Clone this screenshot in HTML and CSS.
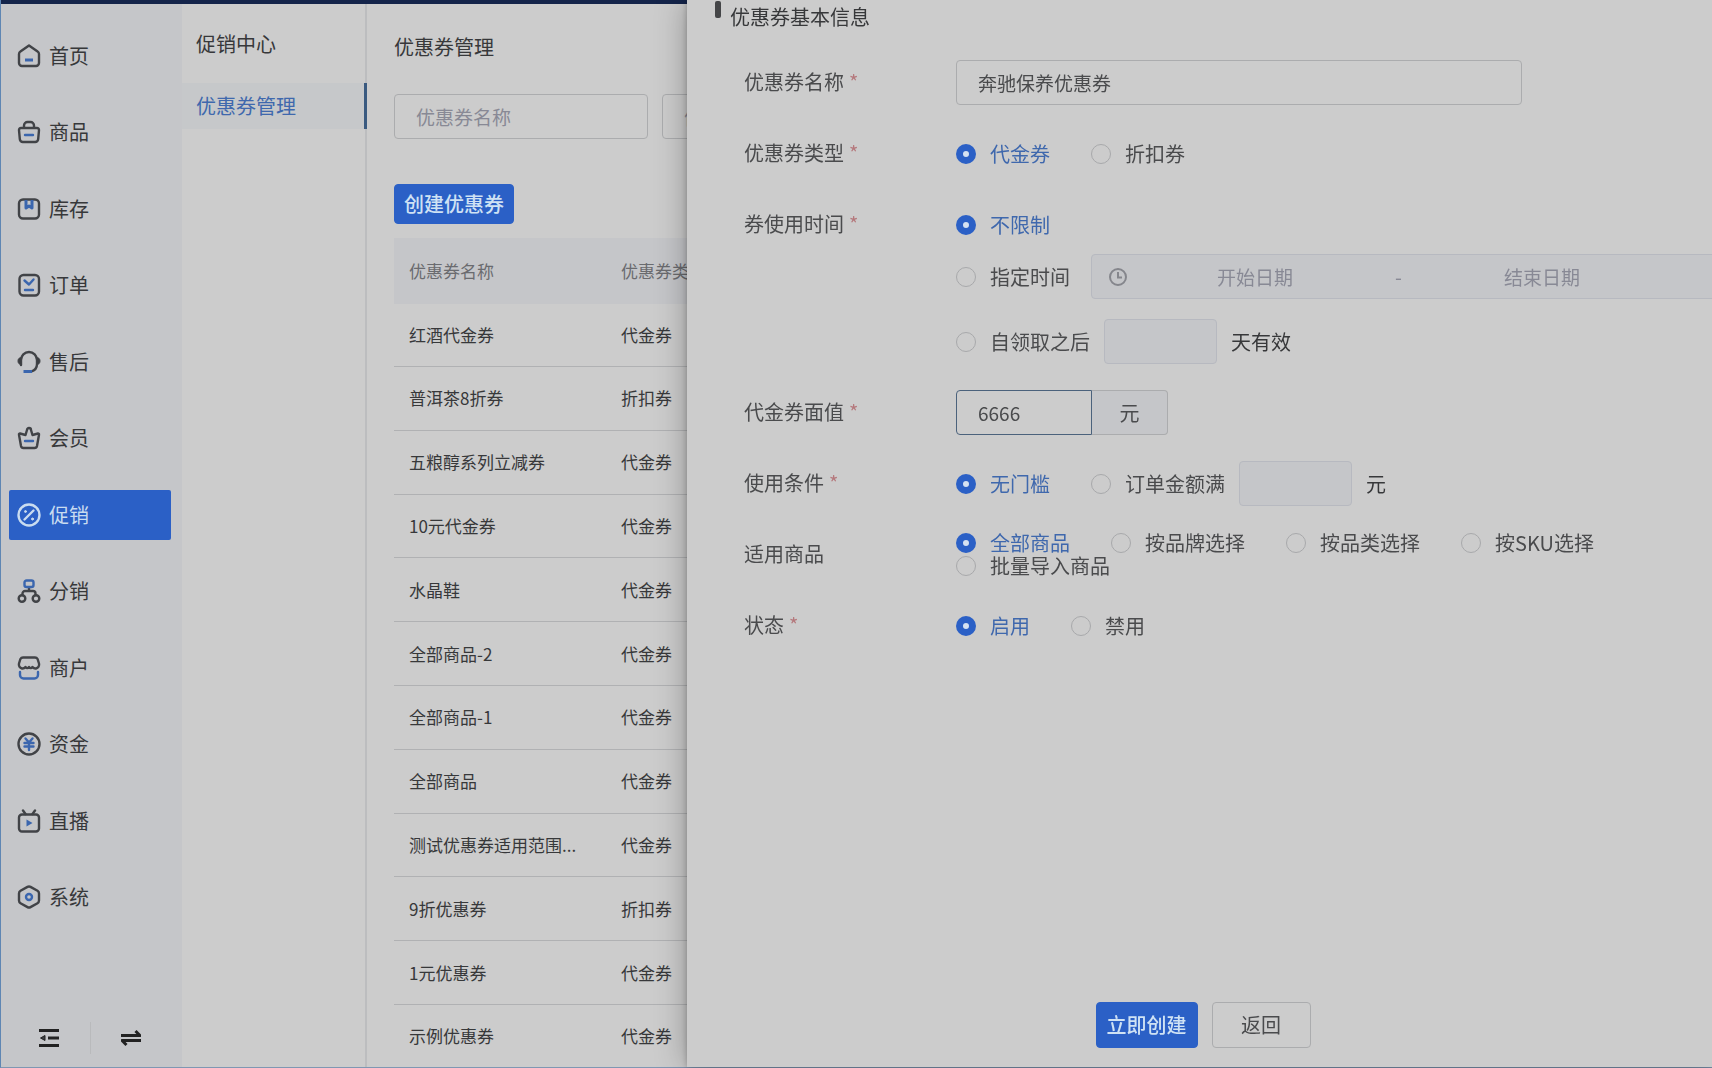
FILE: index.html
```html
<!DOCTYPE html>
<html lang="zh-CN">
<head>
<meta charset="utf-8">
<meta name="viewport" content="width=device-width, initial-scale=1">
<title>优惠券管理</title>
<link rel="stylesheet" href="styles.css">
</head>
<body>
<div class="app">
  <div class="topbar"></div>
  <div class="layout">
    <aside class="sidebar">
      <nav class="nav">
        <a class="nav-item" href="#"><svg class="icon" viewBox="0 0 24 24"><path d="M12 1.500 3.400 7.600A3 3 0 0 0 2 10v9a3 3 0 0 0 3 3h14a3 3 0 0 0 3-3v-9a3 3 0 0 0-1.400-2.400Z"/><path class="accent thick" d="M8 16h8"/></svg>首页</a>
        <a class="nav-item" href="#"><svg class="icon" viewBox="0 0 24 24"><path d="M7 8V5.500a3.500 3.500 0 0 1 3.500-3.500h3A3.500 3.500 0 0 1 17 5.500V8M4 8h16a2 2 0 0 1 2 2.200l-.8 8.800a3 3 0 0 1-3 3H5.800a3 3 0 0 1-3-3L2 10.200A2 2 0 0 1 4 8Z"/><path class="accent" d="M8 15h8"/></svg>商品</a>
        <a class="nav-item" href="#"><svg class="icon" viewBox="0 0 24 24"><rect x="2" y="2.500" width="20" height="19" rx="4"/><path class="accent thick" d="M9 3v8l3-2 3 2V3"/></svg>库存</a>
        <a class="nav-item" href="#"><svg class="icon" viewBox="0 0 24 24"><rect x="2.500" y="2" width="19.500" height="20.500" rx="4"/><path class="accent" d="m7.500 7.500 4.500 4 4.500-5M8 17h8"/></svg>订单</a>
        <a class="nav-item" href="#"><svg class="icon" viewBox="0 0 24 24"><path d="M4 15V10a8 8 0 0 1 16 0v4c0 4-2 6.500-6 7.500"/><path class="solid" d="M4.500 7.500v7C2 14.500 1 13 1 11s1-3.500 3.500-3.500ZM19.500 7.500v7c2.500 0 3.500-1.500 3.500-3.500s-1-3.500-3.500-3.500Z"/><path class="accent thick" d="M6.500 21.500H15"/></svg>售后</a>
        <a class="nav-item" href="#"><svg class="icon" viewBox="0 0 24 24"><path d="M12 2a2 2 0 0 1 2 2l1.500 5 5.500-1.500a1 1 0 0 1 1 1.200L20 20a2.500 2.500 0 0 1-2.500 2h-11A2.500 2.500 0 0 1 4 20L2 8.700a1 1 0 0 1 1-1.200L8.500 9 10 4a2 2 0 0 1 2-2Z"/><path class="accent" d="M8 15h8"/></svg>会员</a>
        <a class="nav-item active" href="#"><svg class="icon" viewBox="0 0 24 24"><circle cx="12" cy="12" r="10.500"/><path d="m7.500 16.500 9-9"/><circle class="solid" cx="8.500" cy="8.500" r="1"/><circle class="solid" cx="15.500" cy="16" r="1"/></svg>促销</a>
        <a class="nav-item" href="#"><svg class="icon" viewBox="0 0 24 24"><path d="M12 9v3M5.500 16v-1.500a2.500 2.500 0 0 1 2.500-2.500h8a2.500 2.500 0 0 1 2.500 2.500V16"/><circle cx="5" cy="19.500" r="3.300"/><circle cx="19" cy="19.500" r="3.300"/><rect class="accent" x="7.500" y="1.500" width="9" height="6.500" rx="2"/></svg>分销</a>
        <a class="nav-item" href="#"><svg class="icon" viewBox="0 0 24 24"><path d="M6 1.500h12a3 3 0 0 1 2.600 1.500l1.400 4.500a4 4 0 0 1-3 5c-1.500.3-2.500-.3-3.500-1.500-1 1.500-2.500 1.500-3.500 0-1 1.500-2.500 1.500-3.500 0-1 1.200-2 1.800-3.500 1.500a4 4 0 0 1-3-5L3.400 3A3 3 0 0 1 6 1.500Z"/><path class="accent" d="M3 16v3a3.500 3.500 0 0 0 3.500 3.500h11A3.500 3.500 0 0 0 21 19v-3"/></svg>商户</a>
        <a class="nav-item" href="#"><svg class="icon" viewBox="0 0 24 24"><circle cx="12" cy="12" r="10.500"/><path class="accent" d="m8.500 6.500 3.500 4 3.500-4M7.500 11h9M7.500 14.500h9M12 11v7"/></svg>资金</a>
        <a class="nav-item" href="#"><svg class="icon" viewBox="0 0 24 24"><rect x="2" y="5.500" width="20" height="17" rx="3"/><path d="M6 1.500 8.500 5M18 1.500 15.500 5"/><path class="accent-fill" d="M9.500 10.500v7l6-3.500Z"/></svg>直播</a>
        <a class="nav-item" href="#"><svg class="icon" viewBox="0 0 24 24"><path d="M10.500 1.900a3 3 0 0 1 3 0l7 3.900A3 3 0 0 1 22 8.400v7.200a3 3 0 0 1-1.500 2.600l-7 3.900a3 3 0 0 1-3 0l-7-3.900A3 3 0 0 1 2 15.600V8.400a3 3 0 0 1 1.500-2.600Z"/><circle class="accent" cx="12" cy="12" r="3"/></svg>系统</a>
      </nav>
      <div class="sidebar-tools">
        <button class="tool" type="button" aria-label="收起菜单"><svg class="icon small" viewBox="0 0 20 20"><path d="M0 2.500h20M9 10h11M0 17.500h20"/><path class="solid" d="M6 7.500v5L1.500 10Z"/></svg></button>
        <button class="tool" type="button" aria-label="切换"><svg class="icon small" viewBox="0 0 20 20"><path d="M0 7.500h19L14.500 3M20 12.500H1L5.500 17"/></svg></button>
      </div>
    </aside>

    <nav class="submenu">
      <h2 class="submenu-title">促销中心</h2>
      <a class="submenu-item" href="#">优惠券管理</a>
    </nav>

    <main class="main">
      <h1 class="page-title">优惠券管理</h1>
      <div class="filters">
        <input class="control filter" type="text" placeholder="优惠券名称" aria-label="优惠券名称">
        <select class="control filter" aria-label="优惠券类型"><option>优惠券类型</option></select>
      </div>
      <button class="btn btn-primary btn-create" type="button">创建优惠券</button>
      <div class="table-wrap">
        <table class="table">
          <thead><tr><th class="col-name">优惠券名称</th><th>优惠券类型</th></tr></thead>
          <tbody>
            <tr><td>红酒代金券</td><td>代金券</td></tr>
            <tr><td>普洱茶8折券</td><td>折扣券</td></tr>
            <tr><td>五粮醇系列立减券</td><td>代金券</td></tr>
            <tr><td>10元代金券</td><td>代金券</td></tr>
            <tr><td>水晶鞋</td><td>代金券</td></tr>
            <tr><td>全部商品-2</td><td>代金券</td></tr>
            <tr><td>全部商品-1</td><td>代金券</td></tr>
            <tr><td>全部商品</td><td>代金券</td></tr>
            <tr><td>测试优惠券适用范围...</td><td>代金券</td></tr>
            <tr><td>9折优惠券</td><td>折扣券</td></tr>
            <tr><td>1元优惠券</td><td>代金券</td></tr>
            <tr><td>示例优惠券</td><td>代金券</td></tr>
          </tbody>
        </table>
      </div>
    </main>
  </div>

  <section class="drawer" aria-labelledby="drawer-title">
    <h2 class="drawer-title" id="drawer-title">优惠券基本信息</h2>
    <form class="form">
      <div class="row">
        <label class="row-label required" for="name">优惠券名称</label>
        <input class="control name-input" id="name" type="text" value="奔驰保养优惠券">
      </div>

      <div class="row" role="radiogroup" aria-labelledby="l-type">
        <span class="row-label required" id="l-type">优惠券类型</span>
        <div class="line">
          <label class="radio"><input type="radio" name="type" checked><span>代金券</span></label>
          <label class="radio"><input type="radio" name="type"><span>折扣券</span></label>
        </div>
      </div>

      <div class="row" role="radiogroup" aria-labelledby="l-time">
        <span class="row-label required" id="l-time">券使用时间</span>
        <div class="stack">
          <div class="line"><label class="radio"><input type="radio" name="time" checked><span>不限制</span></label></div>
          <div class="line line-range">
            <label class="radio"><input type="radio" name="time"><span>指定时间</span></label>
            <div class="range">
              <svg class="clock" viewBox="0 0 18 18"><circle cx="9" cy="9" r="8"/><path d="M9 4v5.500h4"/></svg>
              <input class="range-input" type="text" placeholder="开始日期" aria-label="开始日期" disabled>
              <span class="range-sep">-</span>
              <input class="range-input" type="text" placeholder="结束日期" aria-label="结束日期" disabled>
            </div>
          </div>
          <div class="line line-days">
            <label class="radio"><input type="radio" name="time"><span>自领取之后</span></label>
            <input class="control short" type="text" aria-label="有效天数" disabled>
            <span class="unit">天有效</span>
          </div>
        </div>
      </div>

      <div class="row">
        <label class="row-label required" for="value">代金券面值</label>
        <div class="group">
          <input class="control value-input" id="value" type="text" value="6666">
          <span class="addon">元</span>
        </div>
      </div>

      <div class="row" role="radiogroup" aria-labelledby="l-cond">
        <span class="row-label required" id="l-cond">使用条件</span>
        <div class="line">
          <label class="radio"><input type="radio" name="cond" checked><span>无门槛</span></label>
          <div class="line line-amount">
            <label class="radio"><input type="radio" name="cond"><span>订单金额满</span></label>
            <input class="control short" type="text" aria-label="订单金额" disabled>
            <span class="unit">元</span>
          </div>
        </div>
      </div>

      <div class="row" role="radiogroup" aria-labelledby="l-goods">
        <span class="row-label" id="l-goods">适用商品</span>
        <div class="line wrap">
          <label class="radio"><input type="radio" name="goods" checked><span>全部商品</span></label>
          <label class="radio"><input type="radio" name="goods"><span>按品牌选择</span></label>
          <label class="radio"><input type="radio" name="goods"><span>按品类选择</span></label>
          <label class="radio"><input type="radio" name="goods"><span>按SKU选择</span></label>
          <label class="radio"><input type="radio" name="goods"><span>批量导入商品</span></label>
        </div>
      </div>

      <div class="row" role="radiogroup" aria-labelledby="l-state">
        <span class="row-label required" id="l-state">状态</span>
        <div class="line">
          <label class="radio"><input type="radio" name="state" checked><span>启用</span></label>
          <label class="radio"><input type="radio" name="state"><span>禁用</span></label>
        </div>
      </div>

      <div class="actions">
        <button class="btn btn-primary btn-submit" type="button">立即创建</button>
        <button class="btn btn-plain" type="button">返回</button>
      </div>
    </form>
  </section>
</div>
</body>
</html>
```

FILE: styles.css
```css
:root {
  --surface: #cccccc;
  --muted: #c5c6c9;
  --line: #abacae;
  --blue: #2b60c6;
  --blue-text: #3f68ad;
  --text: #37383a;
  --text-soft: #4a4b4d;
  --placeholder: #888995;
}

* { box-sizing: border-box; }

body {
  margin: 0;
  color: var(--text);
  background: var(--surface);
  font-family: "Noto Sans CJK SC", "Noto Sans", sans-serif;
  font-size: 20px;
  line-height: 22px;
}

h1, h2 { margin: 0; font-size: 20px; font-weight: 400; }
a { color: inherit; text-decoration: none; }
input, select, button { font-family: inherit; color: inherit; }

.app {
  display: flex;
  flex-direction: column;
  min-height: 100vh;
  overflow: hidden;
  border-left: 1px solid #5f86b3;
  border-bottom: 1px solid #7f97b2;
}

.topbar { height: 4px; background: #14244a; }
.layout { flex: 1; display: flex; }

/* Primary navigation */
.sidebar {
  flex: none;
  width: 181px;
  display: flex;
  flex-direction: column;
  background: var(--muted);
}

.nav {
  flex: 1;
  display: flex;
  flex-direction: column;
  justify-content: space-between;
  padding: 27px 11px 0 8px;
}

.nav-item {
  display: flex;
  align-items: center;
  gap: 8px;
  height: 50px;
  padding-left: 8px;
  border-radius: 2px;
}

.nav-item.active { background: var(--blue); color: #c9dcf0; }

.icon {
  width: 24px;
  height: 24px;
  fill: none;
  stroke: #414347;
  stroke-width: 2.4;
  stroke-linecap: round;
  stroke-linejoin: round;
}

.icon .accent { stroke: #3b66ae; }
.icon .thick { stroke-width: 3; stroke-linecap: butt; }
.icon .solid { fill: #3c3e42; stroke-width: 1; }
.icon .accent-fill { fill: #3b66ae; stroke: none; }
.active .icon, .active .icon .solid { stroke: #c9dcf0; }
.active .icon .solid { fill: #c9dcf0; }
.icon.small { width: 20px; height: 20px; stroke: #222; stroke-width: 3; stroke-linecap: butt; }

.sidebar-tools {
  display: flex;
  align-items: flex-end;
  height: 145px;
  padding: 0 10px 13px 7px;
}

.tool {
  flex: 1;
  display: flex;
  align-items: center;
  justify-content: center;
  height: 32px;
  padding: 0;
  border: 0;
  background: none;
}

.tool + .tool { border-left: 1px solid #b9babc; }

/* Secondary navigation */
.submenu {
  flex: none;
  width: 185px;
  border-right: 2px solid #bcbdbf;
}

.submenu-title { padding: 29px 14px 28px; }

.submenu-item {
  display: block;
  margin-right: -2px;
  padding: 12px 14px;
  color: var(--blue-text);
  background: #c6c8ca;
  border-right: 3px solid #3a5a80;
}

/* Coupon list */
.main {
  flex: 1;
  min-width: 0;
  display: flex;
  flex-direction: column;
  align-items: flex-start;
  padding-left: 27px;
}

.page-title { padding: 32px 0 36px; }
.filters { display: flex; gap: 14px; margin-bottom: 45px; }

.control {
  height: 45px;
  padding: 0 21px;
  border: 1px solid var(--line);
  border-radius: 4px;
  background: transparent;
  font-size: 19px;
  color: var(--text-soft);
  appearance: none;
  outline: 0;
}

.control::placeholder, .range-input::placeholder { color: var(--placeholder); opacity: 1; }
.control:disabled { background: var(--muted); border-color: #b7b9c0; }
.filter { width: 254px; }
select.filter { color: var(--placeholder); }

.btn {
  padding: 0;
  border: 1px solid var(--line);
  border-radius: 4px;
  background: transparent;
  font-size: 20px;
  line-height: 22px;
  color: var(--text-soft);
}

.btn-primary {
  border-color: var(--blue);
  background: var(--blue);
  color: #cfe2f4;
  font-weight: 500;
}

.btn-create { width: 120px; height: 40px; margin-bottom: 14px; }

.table-wrap { flex: 1; width: 100%; }

.table {
  width: 100%;
  height: 100%;
  border-collapse: collapse;
  table-layout: fixed;
  font-size: 17px;
}

.table th, .table td { padding: 0 15px; text-align: left; font-weight: 400; }
.table td { border-bottom: 1px solid #b0b1b3; }
.table tr:last-child td { border-bottom: 0; }
.table th { height: 66px; color: #6a6b6f; background: var(--muted); }
.table .col-name { width: 212px; }

/* Drawer */
.drawer {
  position: fixed;
  top: 0;
  right: 0;
  bottom: 1px;
  left: 687px;
  display: flex;
  flex-direction: column;
  overflow: hidden;
  background: var(--surface);
  box-shadow: 0 0 30px rgba(0, 0, 0, .3), 0 0 6px rgba(0, 0, 0, .25);
}

.drawer-title {
  display: flex;
  align-items: flex-start;
  gap: 9px;
  height: 34px;
  padding: 1px 28px 0;
  line-height: 31px;
}

.drawer-title::before {
  content: "";
  width: 6px;
  height: 17px;
  border-radius: 2px;
  background: #444547;
}

.form {
  flex: 1;
  display: flex;
  flex-direction: column;
  gap: 26px;
  padding: 26px 0 19px 57px;
}

.row { display: flex; align-items: flex-start; }

.row-label {
  flex: none;
  width: 212px;
  height: 45px;
  line-height: 44px;
  color: var(--text-soft);
}

.required::after {
  content: "*";
  margin-left: 5px;
  line-height: 22px;
  color: #b5787c;
}

.line { display: flex; align-items: center; gap: 41px; min-height: 45px; }
.line-range { gap: 21px; margin-top: 7px; }
.line-days { gap: 14px; margin-top: 20px; }
.line-amount { gap: 14px; }
.wrap { flex-wrap: wrap; gap: 1px 41px; max-width: 640px; }

.radio { flex: none; display: flex; align-items: center; gap: 14px; color: var(--text-soft); }

.radio input {
  width: 20px;
  height: 20px;
  margin: 0;
  border: 1px solid #a8a9ab;
  border-radius: 50%;
  appearance: none;
}

.radio input:checked { border: 7px solid var(--blue); background: #d5e2f2; }
.radio input:checked + span { color: var(--blue-text); }

.name-input { width: 566px; }
.short { width: 113px; }
.unit { color: var(--text); }

.range {
  flex: none;
  display: flex;
  align-items: center;
  width: 640px;
  height: 45px;
  padding: 0 17px;
  border: 1px solid #b7b9c0;
  border-radius: 4px;
  background: var(--muted);
  color: var(--placeholder);
}

.clock { flex: none; width: 18px; height: 18px; fill: none; stroke: #85868c; stroke-width: 2; }

.range-input {
  width: 256px;
  padding: 0;
  border: 0;
  background: transparent;
  font-size: 19px;
  text-align: center;
}

.range-sep { width: 31px; text-align: center; }

.group { display: flex; }

.value-input {
  width: 136px;
  border-color: #4b627c;
  border-radius: 4px 0 0 4px;
}

.addon {
  width: 76px;
  line-height: 43px;
  text-align: center;
  color: var(--text-soft);
  background: var(--muted);
  border: 1px solid var(--line);
  border-left: 0;
  border-radius: 0 4px 4px 0;
}

.actions {
  display: flex;
  justify-content: center;
  gap: 14px;
  margin-top: auto;
  padding-right: 50px;
}

.actions .btn { height: 46px; }
.btn-submit { width: 102px; }
.btn-plain { width: 99px; }
```
